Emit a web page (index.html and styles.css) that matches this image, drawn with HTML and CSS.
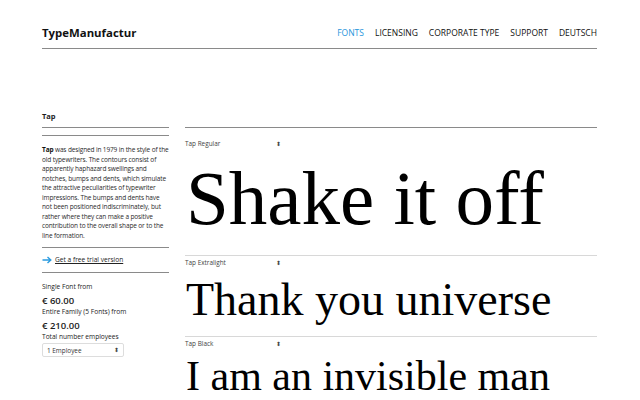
FILE: index.html
```html
<!DOCTYPE html>
<html lang="en">
<head>
    <meta charset="UTF-8">
    <title>Tap - TypeManufactur</title>
    <link rel="stylesheet" href="styles.css">
</head>
<body>
    <div class="page">
        <header class="top">
            <div class="logo">TypeManufactur</div>
            <nav class="nav">
                <a class="active" href="#">FONTS</a>
                <a href="#">LICENSING</a>
                <a href="#">CORPORATE TYPE</a>
                <a href="#">SUPPORT</a>
                <a href="#">DEUTSCH</a>
            </nav>
        </header>

        <main class="font-page">
            <aside class="info">
                <h2 class="font-name">Tap</h2>
                <p class="desc"><b>Tap</b> was designed in 1979 in the style of the old typewriters. The contours consist of apparently haphazard swellings and notches, bumps and dents, which simulate the attractive peculiarities of typewriter impressions. The bumps and dents have not been positioned indiscriminately, but rather where they can make a positive contribution to the overall shape or to the line formation.</p>
                <div class="trial">
                    <svg class="arrow" width="10" height="8" viewBox="0 0 10 8"><path d="M0.5 4H8.5M5.5 1L8.8 4L5.5 7" fill="none" stroke="#2a9be0" stroke-width="1.4"/></svg>
                    <a href="#">Get a free trial version</a>
                </div>
                <div class="prices">
                    <div class="price-label">Single Font from</div>
                    <div class="price">€ 60.00</div>
                    <div class="price-label">Entire Family (5 Fonts) from</div>
                    <div class="price">€ 210.00</div>
                    <div class="price-label">Total number employees</div>
                    <div class="picker">
                        <span>1 Employee</span>
                        <span class="updown">&#x2B0D;</span>
                    </div>
                </div>
            </aside>

            <section class="samples">
                <div class="sample first">
                    <div class="style-pick"><span>Tap Regular</span><span class="updown">&#x2B0D;</span></div>
                    <div class="sample-text big">Shake it off</div>
                </div>
                <div class="sample second">
                    <div class="style-pick"><span>Tap Extralight</span><span class="updown">&#x2B0D;</span></div>
                    <div class="sample-text mid">Thank you universe</div>
                </div>
                <div class="sample third">
                    <div class="style-pick"><span>Tap Black</span><span class="updown">&#x2B0D;</span></div>
                    <div class="sample-text small">I am an invisible man</div>
                </div>
            </section>
        </main>
    </div>
</body>
</html>
```

FILE: styles.css
```css
body { margin: 0; background: #fff; color: #1c1c1c; font-family: "Open Sans", "Noto Sans", sans-serif; overflow: hidden; }
.page { width: 555px; margin: 0 0 0 42px; }

.top { display: flex; justify-content: space-between; align-items: center; padding: 24px 0 6px; line-height: 18px; border-bottom: 1px solid #8a8a8a; }
.logo { font-size: 11.4px; font-weight: 700; color: #111; }
.nav { display: flex; gap: 11px; }
.nav a { font-size: 8.5px; color: #111; text-decoration: none; }
.nav a.active { color: #2a96dc; }

.font-page { display: grid; grid-template-columns: 127px 1fr; gap: 16px; }

.info { padding-top: 61px; }
.font-name { margin: 0; font-size: 7.5px; font-weight: 700; line-height: 12px; padding-bottom: 5px; border-bottom: 1px solid #8a8a8a; }
.desc { margin: 7px 0 0; padding: 9px 0 7px; border-top: 1px solid #8a8a8a; border-bottom: 1px solid #8a8a8a; font-size: 6.5px; letter-spacing: -0.13px; line-height: 9.5px; color: #2a2a2a; }
.desc b { color: #111; }
.trial { display: flex; align-items: center; gap: 3px; padding: 6px 0; line-height: 12px; border-bottom: 1px solid #8a8a8a; }
.trial a { font-size: 6.6px; color: #222; text-decoration: underline; }
.prices { padding-top: 9px; }
.price-label { font-size: 6.6px; line-height: 10px; color: #222; }
.price { font-size: 9.5px; font-weight: 600; line-height: 13px; margin-top: 2px; }
.picker { display: flex; justify-content: space-between; align-items: center; width: 72px; height: 12px; margin-top: 1px; padding: 0 4px; border: 1px solid #ddd; border-radius: 2px; font-size: 6.4px; color: #333; }
.updown { font-size: 6px; color: #444; }

.samples { margin-top: 78px; }
.sample { border-top: 1px solid #d8d8d8; }
.sample.first { border-top-color: #8a8a8a; padding: 11px 0 18px; }
.sample.second { padding: 2px 0 13px; }
.sample.third { padding: 2px 0 0; }
.style-pick { display: flex; justify-content: space-between; width: 96px; font-size: 6.4px; line-height: 10px; color: #444; }
.sample-text { font-family: "Liberation Serif", "Times New Roman", serif; line-height: 1; color: #000; white-space: nowrap; margin-left: 1px; }
.sample-text.big { font-size: 77px; margin-top: 11px; }
.sample-text.mid { font-size: 46px; margin-top: 9px; }
.sample-text.small { font-size: 42px; margin-top: 6px; }
```
